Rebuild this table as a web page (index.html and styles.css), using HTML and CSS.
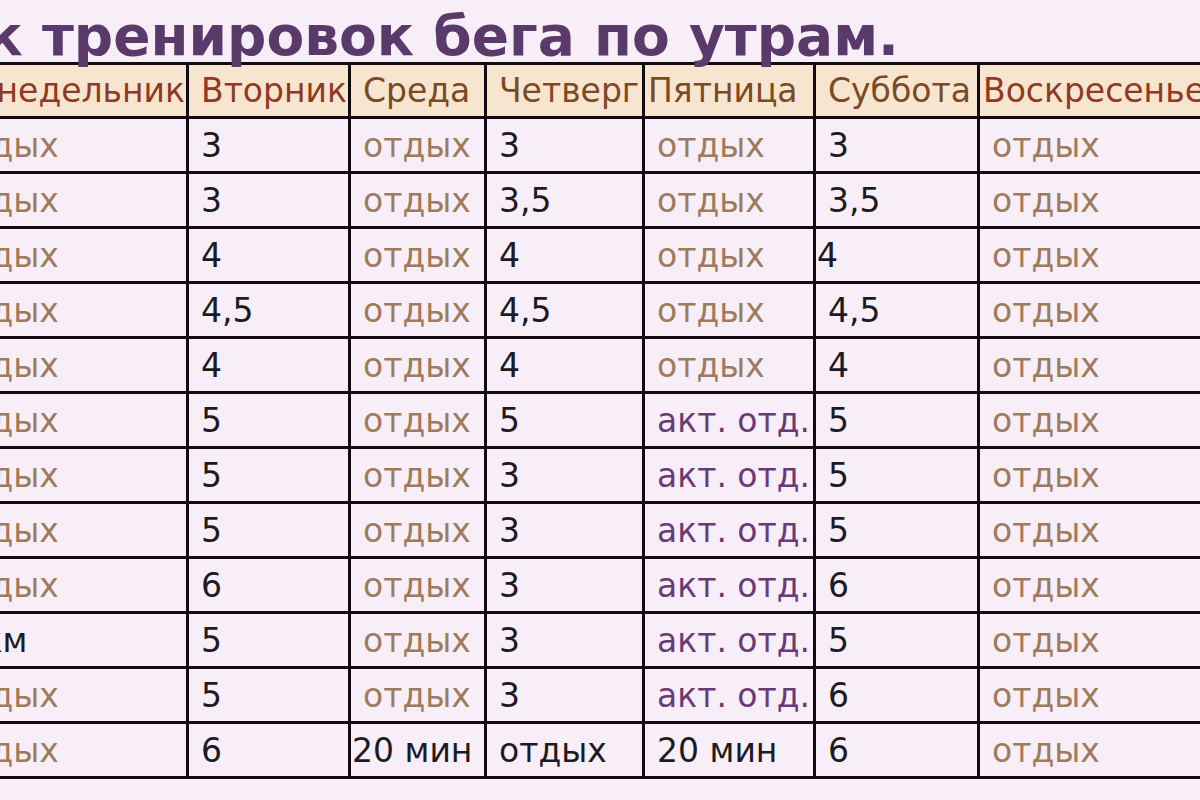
FILE: index.html
```html
<!DOCTYPE html>
<html lang="ru">
<head>
<meta charset="utf-8">
<title>График тренировок бега по утрам</title>
<link rel="stylesheet" href="styles.css">
</head>
<body>
<div class="page">
  <div class="title-row"><h1 class="title">График тренировок бега по утрам.</h1></div>
  <table class="schedule">
    <colgroup>
      <col class="c1"><col class="c2"><col class="c3"><col class="c4"><col class="c5"><col class="c6"><col class="c7">
    </colgroup>
    <thead>
      <tr>
        <th class="h-red h-right">Понедельник</th>
        <th class="h-red">Вторник</th>
        <th class="h-brown">Среда</th>
        <th class="h-brown">Четверг</th>
        <th class="h-brown tight">Пятница</th>
        <th class="h-brown">Суббота</th>
        <th class="h-red tight">Воскресенье</th>
      </tr>
    </thead>
    <tbody>
      <tr><td class="rest">отдых</td><td>3</td><td class="rest">отдых</td><td>3</td><td class="rest">отдых</td><td>3</td><td class="rest">отдых</td></tr>
      <tr><td class="rest">отдых</td><td>3</td><td class="rest">отдых</td><td>3,5</td><td class="rest">отдых</td><td>3,5</td><td class="rest">отдых</td></tr>
      <tr><td class="rest">отдых</td><td>4</td><td class="rest">отдых</td><td>4</td><td class="rest">отдых</td><td class="flush">4</td><td class="rest">отдых</td></tr>
      <tr><td class="rest">отдых</td><td>4,5</td><td class="rest">отдых</td><td>4,5</td><td class="rest">отдых</td><td>4,5</td><td class="rest">отдых</td></tr>
      <tr><td class="rest">отдых</td><td>4</td><td class="rest">отдых</td><td>4</td><td class="rest">отдых</td><td>4</td><td class="rest">отдых</td></tr>
      <tr><td class="rest">отдых</td><td>5</td><td class="rest">отдых</td><td>5</td><td class="active">акт. отд.</td><td>5</td><td class="rest">отдых</td></tr>
      <tr><td class="rest">отдых</td><td>5</td><td class="rest">отдых</td><td>3</td><td class="active">акт. отд.</td><td>5</td><td class="rest">отдых</td></tr>
      <tr><td class="rest">отдых</td><td>5</td><td class="rest">отдых</td><td>3</td><td class="active">акт. отд.</td><td>5</td><td class="rest">отдых</td></tr>
      <tr><td class="rest">отдых</td><td>6</td><td class="rest">отдых</td><td>3</td><td class="active">акт. отд.</td><td>6</td><td class="rest">отдых</td></tr>
      <tr><td>3 км</td><td>5</td><td class="rest">отдых</td><td>3</td><td class="active">акт. отд.</td><td>5</td><td class="rest">отдых</td></tr>
      <tr><td class="rest">отдых</td><td>5</td><td class="rest">отдых</td><td>3</td><td class="active">акт. отд.</td><td>6</td><td class="rest">отдых</td></tr>
      <tr><td class="rest">отдых</td><td>6</td><td class="flush">20 мин</td><td>отдых</td><td>20 мин</td><td>6</td><td class="rest">отдых</td></tr>
    </tbody>
  </table>
</div>
</body>
</html>
```

FILE: styles.css
```css
html, body {
  margin: 0;
  padding: 0;
}

body {
  width: 1200px;
  height: 800px;
  overflow: hidden;
  background: #f8eef7;
  font-family: "DejaVu Sans", Verdana, sans-serif;
}

.page {
  margin-left: -64px;
}

.title-row {
  display: flex;
  justify-content: flex-end;
  width: 963px;
  height: 62px;
}

.title {
  margin: 0;
  padding-top: 10px;
  font-size: 55px;
  line-height: 52px;
  font-weight: bold;
  color: #5a3a6a;
  white-space: nowrap;
  flex-shrink: 0;
}

.schedule {
  border-collapse: collapse;
  table-layout: fixed;
  width: 1364px;
  font-size: 33px;
  color: #1c1a22;
}

.c1 { width: 250px; }
.c2 { width: 162px; }
.c3 { width: 136px; }
.c4 { width: 158px; }
.c5 { width: 171px; }
.c6 { width: 164px; }
.c7 { width: 323px; }

.schedule th,
.schedule td {
  border: 3px solid #120c10;
  height: 52px;
  padding: 0 0 0 12px;
  text-align: left;
  vertical-align: middle;
  white-space: nowrap;
  overflow: visible;
}

.schedule th {
  background: #f8e5cf;
  font-weight: normal;
  height: 51px;
  padding-left: 12px;
}

.schedule th.h-right {
  text-align: right;
  padding: 0 1px 0 0;
}

.schedule th.tight {
  padding-left: 3px;
}

.h-red { color: #8e3a24; }
.h-brown { color: #7a4a24; }

.rest { color: #9d7b5c; }
.active { color: #6a3a78; }

.schedule td.flush {
  padding-left: 1px;
}
```
